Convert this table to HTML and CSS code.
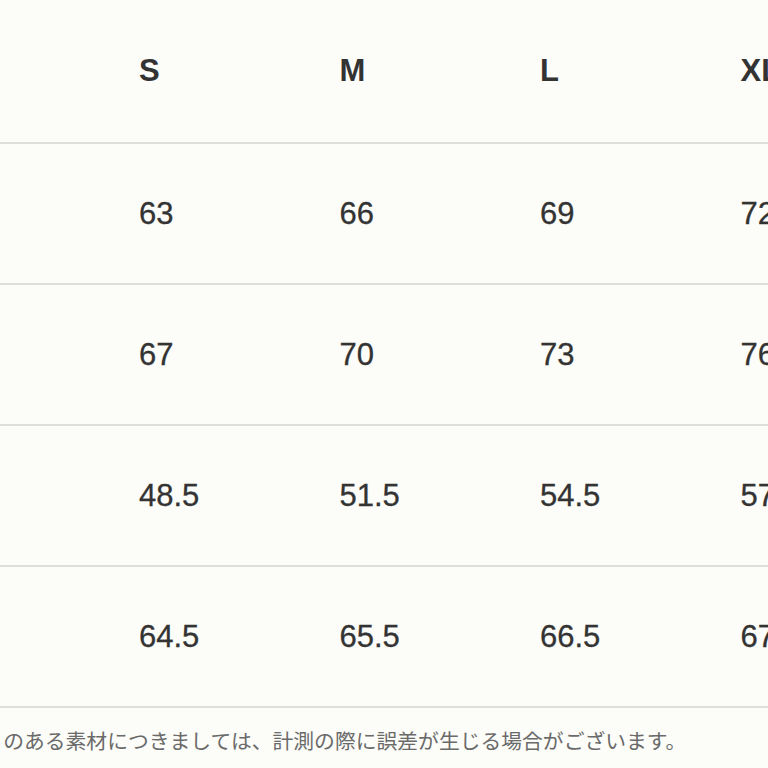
FILE: index.html
```
<!DOCTYPE html>
<html lang="ja">
<head>
<meta charset="utf-8">
<link rel="stylesheet" href="styles.css">
</head>
<body>
<div class="page">
  <div class="table">
    <div class="row head">
      <div class="cell label"></div>
      <div class="cell">S</div>
      <div class="cell">M</div>
      <div class="cell">L</div>
      <div class="cell">XL</div>
    </div>
    <div class="row">
      <div class="cell label"></div>
      <div class="cell">63</div>
      <div class="cell">66</div>
      <div class="cell">69</div>
      <div class="cell">72</div>
    </div>
    <div class="row">
      <div class="cell label"></div>
      <div class="cell">67</div>
      <div class="cell">70</div>
      <div class="cell">73</div>
      <div class="cell">76</div>
    </div>
    <div class="row">
      <div class="cell label"></div>
      <div class="cell">48.5</div>
      <div class="cell">51.5</div>
      <div class="cell">54.5</div>
      <div class="cell">57.5</div>
    </div>
    <div class="row">
      <div class="cell label"></div>
      <div class="cell">64.5</div>
      <div class="cell">65.5</div>
      <div class="cell">66.5</div>
      <div class="cell">67.5</div>
    </div>
  </div>
  <p class="note">※ゆとりのある素材につきましては、計測の際に誤差が生じる場合がございます。</p>
</div>
</body>
</html>
```
FILE: styles.css
```
html, body {
  margin: 0;
  padding: 0;
  background: #fcfcf8;
}
.page {
  width: 768px;
  height: 768px;
  overflow: hidden;
  background: #fcfcf8;
}
.table {
  display: flex;
  flex-direction: column;
}
.row {
  display: grid;
  grid-template-columns: 139px 200.5px 200.5px 200.5px 200.5px;
  height: 139px;
  border-bottom: 2px solid #dededa;
  align-items: center;
}
.row.head {
  height: 142px;
}
.cell {
  font-family: "Liberation Sans", Arial, sans-serif;
  font-size: 31px;
  color: #333333;
  white-space: nowrap;
  -webkit-text-stroke: 0.3px #333333;
}
.head .cell {
  font-weight: bold;
  -webkit-text-stroke: 0;
}
.note {
  margin: 0;
  height: 56px;
  line-height: 56px;
  padding-top: 4px;
  font-family: "Noto Sans CJK JP", sans-serif;
  font-size: 20.8px;
  color: #6a6a6a;
  white-space: nowrap;
  text-indent: -80px;
  border-bottom: 1px solid #ececE8;
}
```
